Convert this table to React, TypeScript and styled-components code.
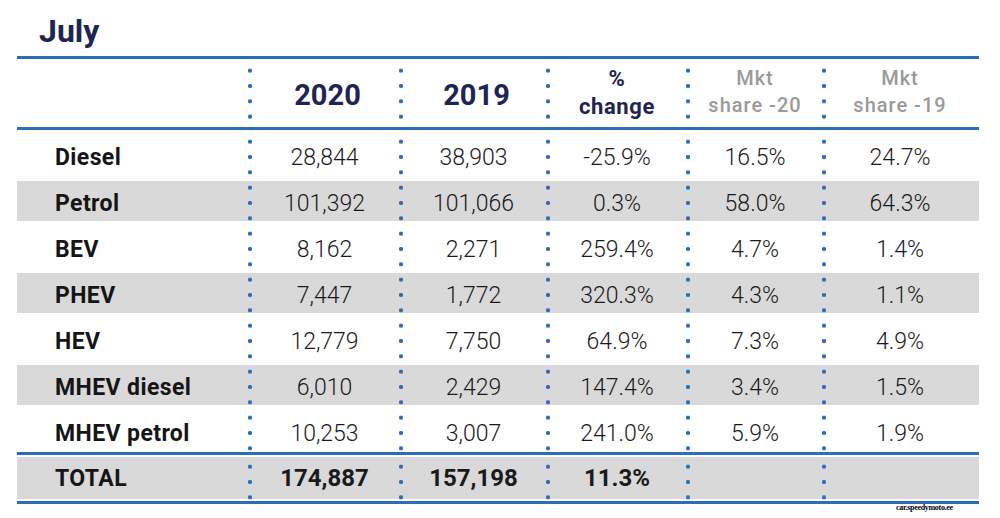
import styled, { createGlobalStyle } from "styled-components";

const GlobalStyle = createGlobalStyle`
  body {
    margin: 0;
    background: #ffffff;
    font-family: Roboto, "Liberation Sans", sans-serif;
  }
`;

const BLUE = "#2c6db6";
const NAVY = "#1f2452";
const GRID = "233px 151px 147px 140px 136px 154px";

const rows = [
  { label: "Diesel", values: ["28,844", "38,903", "-25.9%", "16.5%", "24.7%"] },
  { label: "Petrol", values: ["101,392", "101,066", "0.3%", "58.0%", "64.3%"] },
  { label: "BEV", values: ["8,162", "2,271", "259.4%", "4.7%", "1.4%"] },
  { label: "PHEV", values: ["7,447", "1,772", "320.3%", "4.3%", "1.1%"] },
  { label: "HEV", values: ["12,779", "7,750", "64.9%", "7.3%", "4.9%"] },
  { label: "MHEV diesel", values: ["6,010", "2,429", "147.4%", "3.4%", "1.5%"] },
  { label: "MHEV petrol", values: ["10,253", "3,007", "241.0%", "5.9%", "1.9%"] },
];

export default function App() {
  return (
    <Page>
      <GlobalStyle />
      <Title>July</Title>
      <Table>
        <HeadRow>
          <Cell />
          <Cell $divider>
            <Year>2020</Year>
          </Cell>
          <Cell $divider>
            <Year>2019</Year>
          </Cell>
          <Cell $divider>
            <HeadLabel>
              %<br />
              change
            </HeadLabel>
          </Cell>
          <Cell $divider>
            <ShareLabel>
              Mkt
              <br />
              share -20
            </ShareLabel>
          </Cell>
          <Cell $divider>
            <ShareLabel>
              Mkt
              <br />
              share -19
            </ShareLabel>
          </Cell>
        </HeadRow>
        <Body>
          {rows.map((row, i) => (
            <Row key={row.label} $striped={i % 2 === 1}>
              <LabelCell>{row.label}</LabelCell>
              {row.values.map((v, j) => (
                <Cell key={j} $divider>
                  <Value>{v}</Value>
                </Cell>
              ))}
            </Row>
          ))}
        </Body>
        <TotalRow $striped>
          <LabelCell $total>TOTAL</LabelCell>
          <Cell $divider>
            <Value $bold>174,887</Value>
          </Cell>
          <Cell $divider>
            <Value $bold>157,198</Value>
          </Cell>
          <Cell $divider>
            <Value $bold>11.3%</Value>
          </Cell>
          <Cell $divider />
          <Cell $divider />
        </TotalRow>
      </Table>
      <Credit>car.speedymoto.ee</Credit>
    </Page>
  );
}

const Page = styled.div`
  width: 1000px;
  height: 518px;
  padding-top: 14px;
  box-sizing: border-box;
  position: relative;
`;

const Title = styled.h1`
  margin: 0 0 8px 39px;
  font-family: Roboto, sans-serif;
  font-weight: 700;
  font-size: 32px;
  line-height: 34px;
  color: ${NAVY};
`;

const Table = styled.div`
  margin-left: 17px;
  width: 962px;
  border-top: 3px solid ${BLUE};
  border-bottom: 3px solid ${BLUE};
`;

const Row = styled.div<{ $striped?: boolean }>`
  display: grid;
  grid-template-columns: ${GRID};
  height: 46px;
  background: ${(p) =>
    p.$striped
      ? "linear-gradient(#d9d9d9, #d9d9d9) 0 5px / 100% 40px no-repeat"
      : "transparent"};
`;

const HeadRow = styled(Row)`
  height: 68px;
  border-bottom: 3px solid ${BLUE};
`;

const Body = styled.div`
  border-bottom: 3px solid ${BLUE};
`;

const TotalRow = styled(Row)`
  height: 46px;
  background: linear-gradient(#d9d9d9, #d9d9d9) 0 2px / 100% 42px no-repeat;
`;

const Cell = styled.div<{ $divider?: boolean }>`
  display: flex;
  align-items: center;
  justify-content: center;
  background-image: ${(p) =>
    p.$divider
      ? `radial-gradient(circle at 2px 50%, ${BLUE} 1.8px, transparent 2.4px)`
      : "none"};
  background-size: 4px 15.33px;
  background-repeat: repeat-y;
  background-position: 0 4px;
  margin-left: -2px;
`;

const LabelCell = styled.div<{ $total?: boolean }>`
  display: flex;
  align-items: center;
  padding: ${(p) => (p.$total ? "0" : "9px")} 0 0 38px;
  font-family: Roboto, sans-serif;
  font-weight: 700;
  font-size: 23px;
  letter-spacing: 0.4px;
  color: #151515;
`;

const Year = styled.span`
  font-family: Roboto, sans-serif;
  font-weight: 700;
  font-size: 29px;
  color: ${NAVY};
  padding: 4px 0 0 6px;
`;

const HeadLabel = styled.span`
  font-family: Roboto, sans-serif;
  font-weight: 700;
  font-size: 22px;
  letter-spacing: 0.6px;
  line-height: 28px;
  text-align: center;
  color: ${NAVY};
`;

const ShareLabel = styled.span`
  font-family: Roboto, sans-serif;
  font-weight: 500;
  font-size: 20px;
  letter-spacing: 1px;
  line-height: 27px;
  text-align: center;
  color: #9a9a9a;
  margin-top: -2px;
`;

const Value = styled.span<{ $bold?: boolean }>`
  font-family: Roboto, sans-serif;
  font-weight: ${(p) => (p.$bold ? 700 : 300)};
  font-size: ${(p) => (p.$bold ? "24px" : "23px")};
  color: #1a1a1a;
  padding-top: ${(p) => (p.$bold ? "0" : "9px")};
`;

const Credit = styled.div`
  position: absolute;
  left: 896px;
  top: 503px;
  font-family: "Liberation Serif", serif;
  font-weight: 700;
  font-size: 8px;
  letter-spacing: -0.3px;
  color: #000;
`;
